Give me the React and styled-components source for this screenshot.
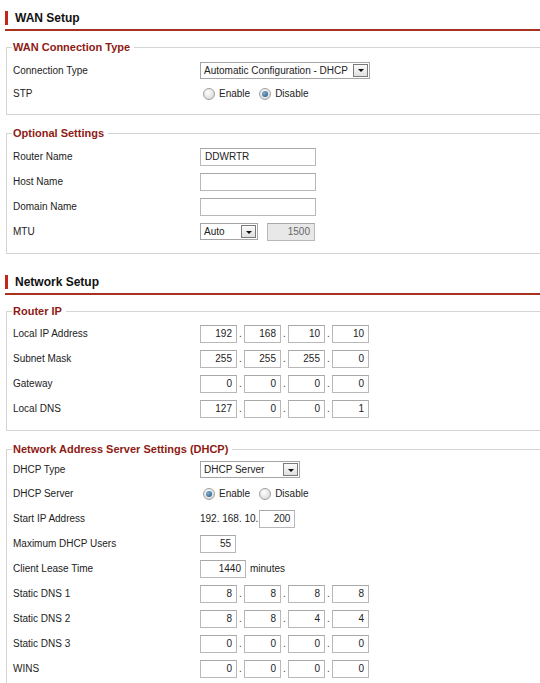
import React from "react";
import styled, { createGlobalStyle } from "styled-components";

const GlobalStyle = createGlobalStyle`
  html, body {
    margin: 0;
    padding: 0;
    background: #ffffff;
    overflow: hidden;
  }
  body {
    font-family: "Liberation Sans", Arial, sans-serif;
    font-size: 10px;
    color: #222;
  }
`;

const Page = styled.div`
  width: 640px;
  padding: 0 0 0 5px;
`;

const SectionTitle = styled.h2`
  display: flex;
  align-items: center;
  gap: 7px;
  margin: ${(p) => (p.$first ? "11px" : "21px")} 0 0 0;
  padding-bottom: 4px;
  border-bottom: 2px solid #a8321f;
  font-size: 12px;
  font-weight: bold;
  color: #111;
  line-height: 14px;

  &::before {
    content: "";
    width: 3px;
    height: 14px;
    background: #c0281c;
  }
`;

const Group = styled.fieldset`
  margin: ${(p) => (p.$first ? "9px" : "11px")} 0 0 1px;
  padding: ${(p) => p.$pt ?? 4}px 0 9px 6px;
  border: 1px solid #d4d4d4;
  border-right: none;
`;

const Legend = styled.legend`
  padding: 0 4px 0 1px;
  margin-left: -1px;
  font-size: 11px;
  font-weight: bold;
  color: #8e1a14;
  line-height: 14px;
`;

const Row = styled.div`
  display: flex;
  align-items: center;
  height: ${(p) => p.$h || 25}px;
`;

const Label = styled.div`
  width: 187px;
  flex: none;
`;

const Field = styled.div`
  display: flex;
  align-items: center;
  gap: ${(p) => p.$gap || 0}px;
`;

const TextBox = styled.div`
  box-sizing: border-box;
  width: ${(p) => p.$w}px;
  height: 18px;
  border: 1px solid #b8b8b8;
  border-top-color: #a8a8a8;
  background: ${(p) => (p.$disabled ? "#e8e8e8" : "#fff")};
  color: ${(p) => (p.$disabled ? "#666" : "#222")};
  padding: 0 4px;
  line-height: 16px;
  text-align: ${(p) => (p.$right ? "right" : "left")};
  font-size: 10px;
`;

const Dot = styled.span`
  width: 7px;
  text-align: center;
  color: #444;
`;

const SelectBox = styled.div`
  box-sizing: border-box;
  width: ${(p) => p.$w}px;
  height: 17px;
  display: flex;
  align-items: center;
  justify-content: space-between;
  border: 1px solid #a5a5a5;
  background: #fff;
  padding: 0 1px 0 3px;
  white-space: nowrap;
`;

const Arrow = styled.span`
  box-sizing: border-box;
  flex: none;
  width: 15px;
  height: 13px;
  border: 1px solid #7a7a7a;
  background: linear-gradient(#fafafa, #e0e0e0);
  display: flex;
  align-items: center;
  justify-content: center;

  &::after {
    content: "";
    border-left: 3px solid transparent;
    border-right: 3px solid transparent;
    border-top: 3px solid #111;
    margin-top: 1px;
  }
`;

const RadioGroup = styled.div`
  display: flex;
  align-items: center;
  gap: 9px;
  padding-left: 3px;
`;

const RadioOption = styled.label`
  display: flex;
  align-items: center;
  gap: 4px;
`;

const RadioCircle = styled.span`
  box-sizing: border-box;
  width: 12px;
  height: 12px;
  border-radius: 50%;
  border: 1px solid #a0a0a0;
  background: radial-gradient(circle at 40% 35%, #ffffff, #d0d0d0);
  display: flex;
  align-items: center;
  justify-content: center;

  &::after {
    content: "";
    display: ${(p) => (p.$on ? "block" : "none")};
    width: 6px;
    height: 6px;
    border-radius: 50%;
    background: radial-gradient(circle at 35% 35%, #7fb2d6, #1d4f72);
  }
`;

const Unit = styled.span`
  margin-left: 4px;
`;

const Plain = styled.span`
  margin-right: 1px;
`;

const Radio = ({ options, value }) => (
  <RadioGroup>
    {options.map((o) => (
      <RadioOption key={o}>
        <RadioCircle $on={o === value} />
        {o}
      </RadioOption>
    ))}
  </RadioGroup>
);

const Select = ({ value, w }) => (
  <SelectBox $w={w}>
    <span>{value}</span>
    <Arrow />
  </SelectBox>
);

const IpField = ({ parts }) => (
  <Field>
    {parts.map((p, i) => (
      <React.Fragment key={i}>
        {i > 0 && <Dot>.</Dot>}
        <TextBox $w={37} $right>
          {p}
        </TextBox>
      </React.Fragment>
    ))}
  </Field>
);

const routerIp = [
  ["Local IP Address", ["192", "168", "10", "10"]],
  ["Subnet Mask", ["255", "255", "255", "0"]],
  ["Gateway", ["0", "0", "0", "0"]],
  ["Local DNS", ["127", "0", "0", "1"]],
];

const dns = [
  ["Static DNS 1", ["8", "8", "8", "8"]],
  ["Static DNS 2", ["8", "8", "4", "4"]],
  ["Static DNS 3", ["0", "0", "0", "0"]],
  ["WINS", ["0", "0", "0", "0"]],
];

export default function App() {
  return (
    <Page>
      <GlobalStyle />
      <SectionTitle $first>WAN Setup</SectionTitle>

      <Group $first>
        <Legend>WAN Connection Type</Legend>
        <Row $h={24}>
          <Label>Connection Type</Label>
          <Select w={170} value="Automatic Configuration - DHCP" />
        </Row>
        <Row $h={23}>
          <Label>STP</Label>
          <Radio options={["Enable", "Disable"]} value="Disable" />
        </Row>
      </Group>

      <Group>
        <Legend>Optional Settings</Legend>
        <Row>
          <Label>Router Name</Label>
          <TextBox $w={116}>DDWRTR</TextBox>
        </Row>
        <Row>
          <Label>Host Name</Label>
          <TextBox $w={116} />
        </Row>
        <Row>
          <Label>Domain Name</Label>
          <TextBox $w={116} />
        </Row>
        <Row>
          <Label>MTU</Label>
          <Field $gap={9}>
            <Select w={58} value="Auto" />
            <TextBox $w={48} $right $disabled>
              1500
            </TextBox>
          </Field>
        </Row>
      </Group>

      <SectionTitle>Network Setup</SectionTitle>

      <Group $first $pt={3}>
        <Legend>Router IP</Legend>
        {routerIp.map(([label, parts]) => (
          <Row key={label}>
            <Label>{label}</Label>
            <IpField parts={parts} />
          </Row>
        ))}
      </Group>

      <Group $pt={2}>
        <Legend>Network Address Server Settings (DHCP)</Legend>
        <Row $h={23}>
          <Label>DHCP Type</Label>
          <Select w={100} value="DHCP Server" />
        </Row>
        <Row>
          <Label>DHCP Server</Label>
          <Radio options={["Enable", "Disable"]} value="Enable" />
        </Row>
        <Row>
          <Label>Start IP Address</Label>
          <Field>
            <Plain>192. 168. 10.</Plain>
            <TextBox $w={36} $right>
              200
            </TextBox>
          </Field>
        </Row>
        <Row>
          <Label>Maximum DHCP Users</Label>
          <TextBox $w={36} $right>
            55
          </TextBox>
        </Row>
        <Row>
          <Label>Client Lease Time</Label>
          <Field>
            <TextBox $w={46} $right>
              1440
            </TextBox>
            <Unit>minutes</Unit>
          </Field>
        </Row>
        {dns.map(([label, parts]) => (
          <Row key={label}>
            <Label>{label}</Label>
            <IpField parts={parts} />
          </Row>
        ))}
      </Group>
    </Page>
  );
}
